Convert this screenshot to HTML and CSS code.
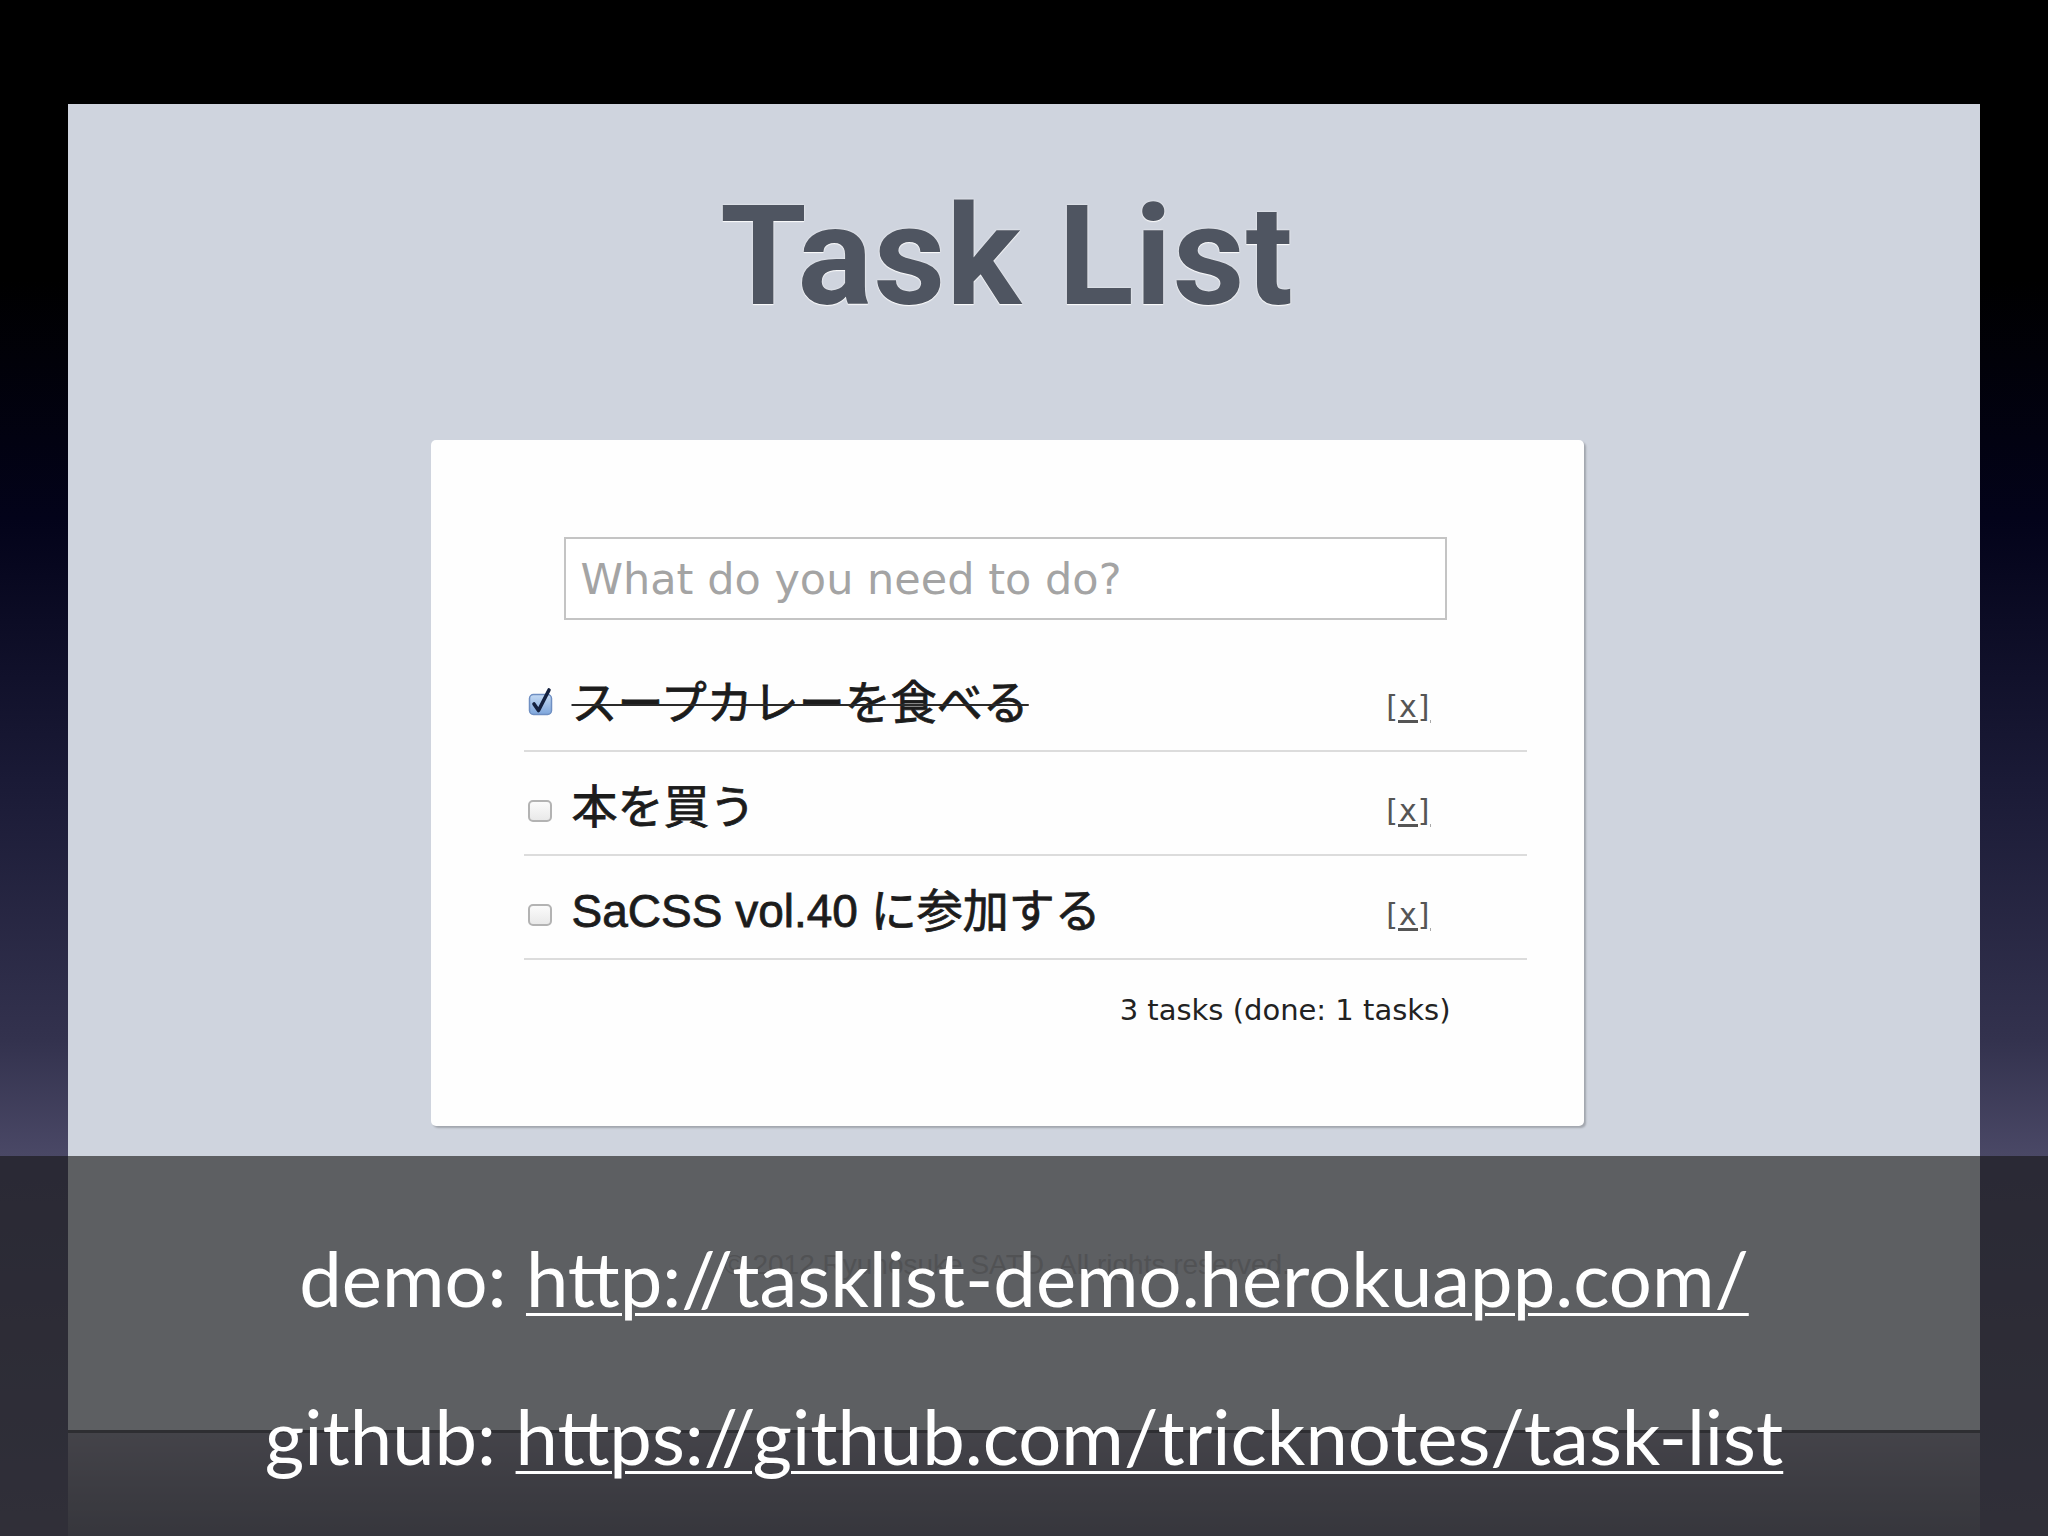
FILE: index.html
```html
<!DOCTYPE html>
<html lang="ja">
<head>
<meta charset="utf-8">
<title>Task List</title>
<link rel="stylesheet" href="styles.css">
</head>
<body>
<div class="stage">
  <div class="frame">
    <h1 class="title">Task List</h1>
    <div class="card">
      <input class="new-task" type="text" placeholder="What do you need to do?">
      <ul class="tasks">
        <li class="task done">
          <span class="check checked">
            <svg width="26" height="30" viewBox="0 0 26 30"><defs><linearGradient id="cg" x1="0" y1="0" x2="0" y2="1"><stop offset="0" stop-color="#c4daf4"/><stop offset="1" stop-color="#7ea6dc"/></linearGradient></defs><rect x="1.5" y="8.5" width="22" height="20" rx="4" fill="url(#cg)" stroke="#6f8fc2" stroke-width="1.5"/><path d="M6 18 L10.5 24.5 L21 4" fill="none" stroke="#14213f" stroke-width="3.6" stroke-linecap="round" stroke-linejoin="round"/></svg>
          </span>
          <span class="label">スープカレーを食べる</span>
          <a class="remove">[x]</a>
        </li>
        <li class="task">
          <span class="check"></span>
          <span class="label">本を買う</span>
          <a class="remove">[x]</a>
        </li>
        <li class="task">
          <span class="check"></span>
          <span class="label">SaCSS vol.40 に参加する</span>
          <a class="remove">[x]</a>
        </li>
      </ul>
      <p class="summary">3 tasks (done: 1 tasks)</p>
    </div>
    <p class="copyright">© 2012 Ryunosuke SATO. All rights reserved.</p>
  </div>
  <div class="reflection"></div>
</div>
<div class="overlay">
  <p class="line">demo: <a class="url">http://tasklist-demo.herokuapp.com/</a></p>
  <p class="line">github: <a class="url">https://github.com/tricknotes/task-list</a></p>
</div>
</body>
</html>
```
FILE: styles.css
```css
html, body {
  margin: 0;
  padding: 0;
}

body {
  width: 2048px;
  height: 1536px;
  position: relative;
  overflow: hidden;
  background: linear-gradient(to bottom,
    #000000 0px,
    #000000 280px,
    #03031a 520px,
    #1a1a36 780px,
    #33324e 1040px,
    #4a4866 1156px,
    #5a5870 1536px);
  font-family: "Liberation Sans", "Noto Sans CJK JP", sans-serif;
}

.stage {
  padding: 104px 68px 0;
}

.frame {
  box-sizing: border-box;
  height: 1326px;
  background: #cfd4de;
  padding: 77px 34px 0 0;
  display: flex;
  flex-direction: column;
  align-items: center;
}

.title {
  margin: 0;
  font-family: "Roboto", "Liberation Sans", sans-serif;
  font-weight: 700;
  font-size: 140px;
  line-height: 150px;
  letter-spacing: 1px;
  color: #4f5561;
  text-shadow: 0 0 2px #ffffff, 0 1px 1px rgba(255, 255, 255, 0.9);
}

.card {
  box-sizing: border-box;
  width: 1153px;
  height: 686px;
  margin-top: 109px;
  padding: 97px 57px 0 93px;
  background: #fefefe;
  border-radius: 5px;
  box-shadow: 2px 2px 2px rgba(0, 0, 0, 0.22);
}

.new-task {
  display: block;
  box-sizing: border-box;
  margin: 0 0 0 40px;
  width: 883px;
  height: 83px;
  padding: 0 15px;
  border: 2px solid #c4c4c4;
  border-radius: 0;
  background: #fff;
  font-family: "DejaVu Sans", sans-serif;
  font-size: 43px;
  color: #333;
  outline: none;
}

.new-task::placeholder {
  color: #a4a4a4;
}

.tasks {
  list-style: none;
  margin: 28px 0 0;
  padding: 0;
}

.task {
  box-sizing: border-box;
  height: 104px;
  border-bottom: 2px solid #dcdcdc;
  display: flex;
  align-items: center;
  padding: 0 96px 0 4px;
}

.check {
  box-sizing: border-box;
  width: 24px;
  height: 22px;
  margin-top: 16px;
  border: 2px solid #b3b3b3;
  border-radius: 5px;
  background: linear-gradient(to bottom, #fbfbfb, #e9e9e9);
  flex: none;
}

.check.checked {
  width: 26px;
  height: 30px;
  margin-top: 4px;
  border: none;
  background: none;
}

.check svg {
  display: block;
}

.label {
  flex: 1;
  margin-left: 20px;
  font-family: "Liberation Sans", "Noto Sans CJK JP", sans-serif;
  font-size: 46px;
  color: #1c1c1c;
  white-space: nowrap;
  -webkit-text-stroke: 0.8px #1c1c1c;
}

.task.done .label {
  margin-left: 18px;
  text-decoration: line-through;
  text-decoration-thickness: 2px;
  text-decoration-color: #2a2a2a;
}

.remove {
  margin-top: 14px;
  font-family: "DejaVu Sans", sans-serif;
  font-size: 30px;
  letter-spacing: 1px;
  color: #555;
  text-decoration: underline;
  text-underline-offset: 3px;
}

.summary {
  margin: 33px 76px 0 0;
  text-align: right;
  font-family: "DejaVu Sans", sans-serif;
  font-size: 29px;
  line-height: 35px;
  color: #222;
}

.copyright {
  margin: 122px 0 0;
  font-family: "Liberation Sans", sans-serif;
  font-size: 28px;
  line-height: 34px;
  color: #b0b3b9;
}

.reflection {
  height: 106px;
  box-sizing: border-box;
  border-top: 3px solid #55555f;
  background: linear-gradient(to bottom, #8e8c9c, #6a6a7a);
}

.overlay {
  position: absolute;
  left: 0;
  top: 1156px;
  width: 2048px;
  height: 380px;
  box-sizing: border-box;
  padding-top: 43px;
  background: rgba(23, 23, 23, 0.62);
}

.line {
  margin: 0;
  text-align: center;
  font-family: "Lato", "Liberation Sans", sans-serif;
  font-size: 76px;
  line-height: 158px;
  color: #ffffff;
}

.url {
  color: #ffffff;
  text-decoration: underline;
  text-decoration-thickness: 3px;
  text-underline-offset: 6px;
}
```
